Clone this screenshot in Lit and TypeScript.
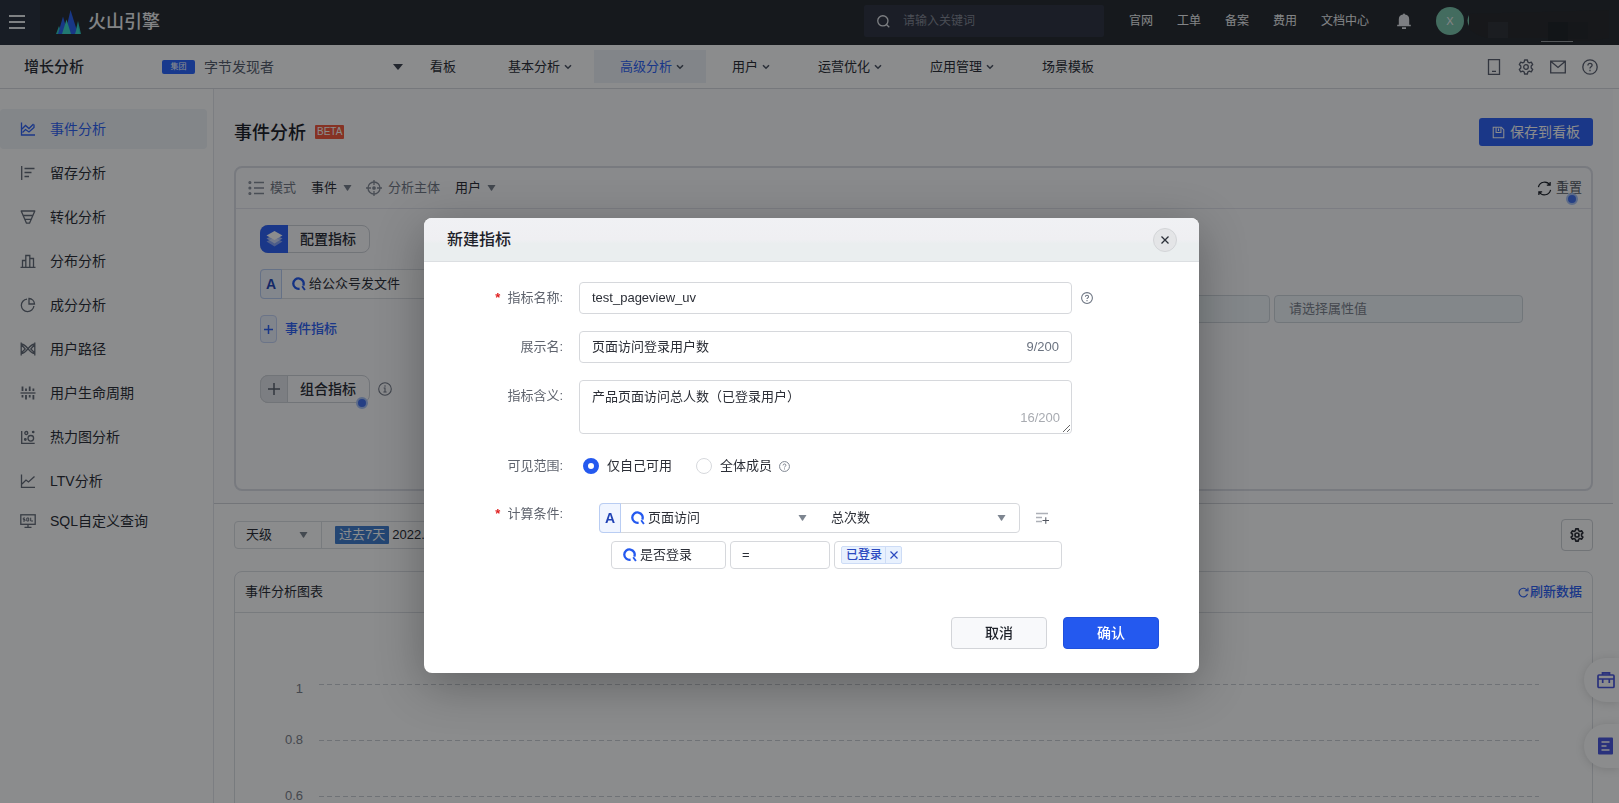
import { LitElement, html, css, svg, nothing, TemplateResult } from "lit";

const line = (body: TemplateResult, size = 16, width = 1.3) => html`<svg
  class="ico" width=${size} height=${size} viewBox="0 0 16 16" fill="none"
  stroke="currentColor" stroke-width=${width} aria-hidden="true">${body}</svg>`;

const gear = svg`<path d="M6.600 1h2.800l.4 2 1.500.9 2-.7 1.400 2.400-1.500 1.400v2l1.500 1.400-1.400 2.400-2-.7-1.500.9-.4 2H6.600l-.4-2-1.500-.9-2 .7-1.400-2.400L2.800 9V7L1.300 5.600l1.400-2.400 2 .7 1.500-.9z" stroke-linejoin="round"/><circle cx="8" cy="8" r="2.300"/>`;
const question = svg`<circle cx="8" cy="8" r="7.200"/><path d="M5.900 6.400c0-1.300.9-2.100 2.100-2.100s2.100.8 2.100 1.900c0 1.500-2.100 1.600-2.100 3.200"/><path d="M8 10.800v1.500"/>`;
const chevron = html`<svg width="8" height="6" viewBox="0 0 8 6" fill="none" stroke="#4e5564" stroke-width="1.600" aria-hidden="true"><path d="M1 1.200l3 3 3-3"/></svg>`;
const triangle = html`<svg class="tri" width="9" height="6" viewBox="0 0 9 6" aria-hidden="true"><path d="M0.500 0h8L5 5.600a.7.7 0 0 1-1 0z" fill="currentColor"/></svg>`;
const queryMark = html`<svg class="qmark" width="14" height="14" viewBox="0 0 14 14" fill="none" stroke="currentColor" stroke-width="2.300" aria-hidden="true"><path d="M7.600 11.700A5.200 5.200 0 1 1 11.300 8.600"/><path d="M10.200 9.300l2.700 3.700" stroke-width="1.900"/></svg>`;

const sideItems: { name: string; icon: TemplateResult; active?: boolean }[] = [
  { name: "事件分析", active: true, icon: svg`<path d="M1.500 1.500v12.500h13.500"/><path d="M2 8l3.500-3.500 3.500 3 4.500-4.500"/><path d="M2.500 11.500l3-3 3.500 2.500 5-4.500v-3"/>` },
  { name: "留存分析", icon: svg`<path d="M1.700 1v14M4.500 3.500h10M4.500 7.500h7M4.500 11.500h4.500"/>` },
  { name: "转化分析", icon: svg`<path d="M1.200 2h13.600L9.500 14.200h-3z" stroke-linejoin="round"/><path d="M3.200 6.500h9.600M5 10.300h6"/>` },
  { name: "分布分析", icon: svg`<path d="M.5 14.300h15M2.500 14V7.500h3.300M5.800 14V2.500h4V14M9.800 5.500h3.700V14"/>` },
  { name: "成分分析", icon: svg`<path d="M7 2.100A6.300 6.300 0 1 0 13.900 9"/><path d="M9 1.500a5.800 5.800 0 0 1 5.500 5.500H9z"/>` },
  { name: "用户路径", icon: svg`<path d="M1.200 1.500v13M14.800 1.500v13M1.200 3c6 0 7.600 9.500 13.600 9.500M1.200 12.500C7.200 12.500 8.800 3 14.800 3M1.200 3.500l4 4.500-4 4M14.800 3.500l-4 4.500 4 4"/>` },
  { name: "用户生命周期", icon: svg`<path d="M.5 8h15"/><path d="M2.500 1.500v4.500M6 3.500V6M9.700 1.500V6M13.400 3.500V6M2.500 10v2.500M6 10v4.500M9.700 10v2.500M13.400 10v4.500" stroke-width="1.800"/>` },
  { name: "热力图分析", icon: svg`<path d="M1.700 2v12.300h13"/><circle cx="10.800" cy="9.300" r="2.800"/><circle cx="6.300" cy="4" r="1.500"/><circle cx="13.200" cy="3" r=".7"/><circle cx="5.300" cy="10.500" r=".8"/>` },
  { name: "LTV分析", icon: svg`<path d="M1.500 1.500v12.800h13.500M2 11l4-4 2.500 2 6-5.500"/>` },
  { name: "SQL自定义查询", icon: svg`<rect x=".8" y="1.800" width="14.400" height="9.500"/><path d="M8 11.500v2.500M4.500 14.300h7"/><path d="M5 5H3.300v1.500H5V8H3M8.700 8H6.800V5h1.900zM10.700 4.700V8h2.300" stroke-width="1"/>` },
];

const navItems = [
  { name: "看板" },
  { name: "基本分析", more: true },
  { name: "高级分析", more: true, active: true },
  { name: "用户", more: true },
  { name: "运营优化", more: true },
  { name: "应用管理", more: true },
  { name: "场景模板" },
];

class AppRoot extends LitElement {
  static properties = {
    scope: { state: true },
    tagged: { state: true },
  };
  declare scope: string;
  declare tagged: boolean;

  constructor() {
    super();
    this.scope = "self";
    this.tagged = true;
  }

  static styles = css`
    :host {
      display: flex;
      flex-direction: column;
      height: 100vh;
      overflow: hidden;
      font: 13px/20px "Liberation Sans", "Noto Sans CJK SC", sans-serif;
      color: #2b2e36;
      background: #fff;
      --ink: #2b2e36;
      --blue: #2459ef;
      --line: #dcdfe4;
    }
    * { box-sizing: border-box; }
    button, input, select, textarea {
      font: inherit;
      color: inherit;
      margin: 0;
      padding: 0;
      border: 0;
      background: none;
      outline: none;
      border-radius: 0;
    }
    button { cursor: pointer; }
    select { appearance: none; }
    a { color: inherit; text-decoration: none; }
    h1, h2 { margin: 0; font-weight: 500; color: #1d2129; }
    svg { display: block; flex: none; }

    /* top bar */
    .topbar {
      flex: none;
      display: flex;
      height: 45px;
      background: #272b30;
      color: #fff;
      font-size: 12px;
    }
    .burger {
      width: 40px;
      display: grid;
      place-items: center;
      padding: 0 6px 1px 0;
      background: #2b3240;
    }
    .brand {
      display: flex;
      align-items: center;
      gap: 7px;
      margin-left: 16px;
      padding-bottom: 2px;
      font-size: 18px;
      font-weight: 500;
      color: #f0f1f3;
    }
    .search {
      display: flex;
      align-items: center;
      gap: 13px;
      width: 240px;
      height: 32px;
      margin: 5px 25px 0 auto;
      padding: 0 13px;
      border-radius: 2px;
      background: #303443;
    }
    .search input { flex: 1; min-width: 0; }
    .search input::placeholder { color: #868a96; opacity: 1; }
    .toplinks {
      display: flex;
      align-items: center;
      gap: 24px;
      height: 42px;
      color: #f0f1f3;
    }
    .bell { margin-left: 3px; }
    .avatar {
      width: 28px;
      height: 28px;
      border-radius: 50%;
      background: #7bc4aa;
      display: grid;
      place-items: center;
      font-size: 11px;
      margin-right: -21px;
    }

    /* product bar */
    .subbar {
      flex: none;
      display: flex;
      align-items: center;
      height: 44px;
      border-bottom: 1px solid #d9dbe0;
      padding: 0 21px 0 24px;
    }
    .product { width: 138px; font-size: 15px; font-weight: 500; }
    .level {
      width: 33px;
      height: 14px;
      border-radius: 2px;
      background: #2b67ff;
      color: #fff;
      font-size: 8px;
      line-height: 14px;
      text-align: center;
    }
    .project {
      display: flex;
      align-items: center;
      justify-content: space-between;
      width: 209px;
      padding: 0 1px 0 9px;
      color: #3e4350;
    }
    .project span { font-size: 14px; color: #575e6e; }
    .nav { display: flex; flex: 1; }
    .nav a {
      display: flex;
      align-items: center;
      gap: 4px;
      height: 33px;
      padding: 0 26px;
    }
    .nav a.more { padding-right: 22px; }
    .nav a.active { background: #eef3f8; color: #2f62f5; }
    .tools { display: flex; gap: 16px; color: #5b6070; }

    /* body */
    .body { flex: 1; display: flex; min-height: 0; padding-right: 6px; }
    .side {
      flex: none;
      width: 214px;
      border-right: 1px solid #e4e6ea;
      padding: 20px 6px 0 0;
      font-size: 14px;
    }
    .side a {
      display: flex;
      align-items: center;
      gap: 14px;
      height: 40px;
      padding-left: 20px;
      margin-bottom: 4px;
    }
    .side a:nth-last-child(2) { margin-bottom: 0; }
    .side svg { color: #656c78; }
    .side .active, .side .active svg { color: #2f62f5; }
    .side .active { background: #f0f4f7; border-radius: 4px; }
    .main { flex: 1; min-width: 0; }
    .upper {
      padding: 29px 20px 12px;
      background: #fbfbfd;
      border-bottom: 1px solid #d3d5da;
    }
    .titlebar { display: flex; align-items: center; gap: 9px; height: 28px; }
    .titlebar h1 { font-size: 18px; line-height: 28px; padding-top: 2px; }
    .beta {
      padding: 0 2px;
      height: 14px;
      border-radius: 1px;
      background: #f5593d;
      color: #fff;
      font-size: 10px;
      line-height: 14px;
    }
    .save {
      display: flex;
      align-items: center;
      gap: 5px;
      height: 28px;
      margin-left: auto;
      padding: 0 13px;
      border-radius: 3px;
      background: #2f62f5;
      color: #fff;
      font-size: 14px;
    }
    .panel {
      height: 325px;
      margin-top: 20px;
      border: 2px solid #dcdee6;
      border-radius: 8px;
    }
    .modes {
      display: flex;
      align-items: center;
      height: 41px;
      padding: 0 9px 0 12px;
      border-bottom: 1px solid #e3e4ec;
      color: #737986;
    }
    .modes .ico { margin-right: 6px; color: #868c98; }
    .pick { display: flex; align-items: center; color: var(--ink); margin: 0 14px 0 15px; }
    .pick select { padding-right: 14px; }
    .tri { color: #79808c; pointer-events: none; }
    .pick .tri { margin-left: -9px; }
    .reset { position: relative; display: flex; align-items: center; gap: 4px; margin-left: auto; color: #5a5f69; }
    .modes .reset .ico { color: #1d2129; margin: 0; }
    .dot {
      position: absolute;
      right: 4px;
      bottom: -7px;
      width: 12px;
      height: 12px;
      border: 2px solid #a9c3f7;
      border-radius: 50%;
      background: #4371ef;
    }
    .chip .dot { right: 1px; }
    .config { display: flex; padding: 16px 68px 0 24px; }
    .defs { display: flex; flex-direction: column; align-items: flex-start; width: 700px; }
    .chip {
      position: relative;
      display: flex;
      align-items: center;
      height: 28px;
      padding-right: 13px;
      border: 1px solid #cfd2d8;
      border-radius: 8px;
      font-size: 14px;
      font-weight: 500;
    }
    .chip i {
      width: 28px;
      height: 28px;
      margin: -1px 12px -1px -1px;
      display: grid;
      place-items: center;
      border-radius: 8px 0 0 8px;
      background: #2f62f5;
    }
    .chip.plus i { background: #e4e6ea; border: 1px solid #cfd2d8; color: #5a616d; }
    .metric {
      display: flex;
      align-items: center;
      width: 100%;
      height: 30px;
      margin: 16px 0;
      border: 1px solid var(--line);
      border-radius: 4px;
      background: #fff;
    }
    .letter {
      width: 22px;
      height: 30px;
      margin: -1px 10px -1px -1px;
      border: 1px solid #b9cdf3;
      border-radius: 4px 0 0 4px;
      background: #f0f5ff;
      color: #2547b8;
      font-size: 14px;
      font-weight: 700;
      line-height: 29px;
      text-align: center;
      flex: none;
    }
    .qmark { color: var(--blue); margin-right: 3px; }
    .add { display: flex; align-items: center; gap: 8px; color: #2f62f5; font-weight: 500; }
    .add i {
      width: 17px;
      height: 28px;
      display: grid;
      place-items: center;
      border: 1px solid #c4d3f5;
      border-radius: 4px;
      background: #edf2fd;
    }
    .combo { display: flex; align-items: center; gap: 8px; margin-top: 32px; color: #737986; }
    .combo .chip { color: var(--ink); }
    .filters { flex: 1; display: flex; justify-content: flex-end; gap: 4px; padding-top: 70px; }
    .filters select {
      width: 249px;
      height: 28px;
      padding-left: 14px;
      border: 1px solid #d0d6dc;
      border-radius: 4px;
      background: #f1f6f9;
      color: #7d838e;
      opacity: 1;
    }
    .lower { padding: 15px 20px 0; }
    .range { display: flex; align-items: center; justify-content: space-between; height: 32px; }
    .rangebox { display: flex; align-items: center; width: 460px; height: 28px; border: 1px solid var(--line); border-radius: 4px; }
    .rangebox label { display: flex; align-items: center; width: 87px; height: 28px; padding-left: 11px; border-right: 1px solid var(--line); }
    .rangebox select { width: 63px; margin-right: -10px; }
    .past { margin: 0 3px 0 13px; padding: 0 4px; height: 18px; line-height: 18px; border-radius: 1px; background: #417fd0; color: #fff; }
    .settings { width: 32px; height: 32px; display: grid; place-items: center; border: 1px solid #cfd2d6; border-radius: 4px; }
    .card { height: 400px; margin-top: 20px; border: 1px solid var(--line); border-radius: 8px 8px 0 0; }
    .cardhead { display: flex; align-items: center; justify-content: space-between; height: 41px; padding: 0 10px; border-bottom: 1px solid var(--line); }
    .refresh { display: flex; align-items: center; gap: 1px; color: #2f62f5; font-weight: 500; }
    .chart { display: grid; gap: 42px; padding: 64px 53px 0 0; color: #7d828c; line-height: 14px; }
    .tick { display: grid; grid-template-columns: 68px 1fr; gap: 16px; align-items: start; height: 14px; text-align: right; }
    .tick:first-child span { padding-top: 5px; }
    .tick hr {
      margin: 7px 0 0;
      width: 100%;
      border: 0;
      height: 1px;
      background: repeating-linear-gradient(90deg, #cccfd4 0 5px, transparent 5px 8px);
    }
    .float {
      position: fixed;
      right: 0;
      width: 35px;
      height: 44px;
      padding-left: 13px;
      border-radius: 22px 0 0 22px;
      background: #fff;
      box-shadow: 0 1px 10px rgba(0, 0, 0, 0.14);
      color: #4a57e0;
    }
    .kit { bottom: 101px; }
    .note { bottom: 35px; }

    /* dialog */
    .mask {
      position: fixed;
      inset: 0;
      display: flex;
      justify-content: center;
      align-items: flex-start;
      padding: 218px 0 0 4px;
      background: rgba(2, 4, 6, 0.46);
    }
    .dialog {
      width: 775px;
      border-radius: 8px;
      background: #fff;
      overflow: hidden;
      box-shadow: 0 12px 48px rgba(0, 0, 0, 0.3);
    }
    .dialog header {
      display: flex;
      align-items: center;
      justify-content: space-between;
      height: 44px;
      padding: 0 22px 0 23px;
      border-bottom: 1px solid #dcdfe2;
      background: linear-gradient(#f0f1f4, #efeff2 50%, #eaeeef 60%, #eaeeef);
    }
    .dialog h2 { font-size: 16px; line-height: 22px; padding-top: 1px; }
    .close { width: 24px; height: 24px; display: grid; place-items: center; border: 1px solid #d3d5d8; border-radius: 50%; background: #e4e5e7; }
    .form { display: flex; flex-direction: column; gap: 17px; padding: 20px 24px 0 0; }
    .field { display: grid; grid-template-columns: 139px 1fr; gap: 16px; }
    .field > label, .field > .lab { text-align: right; line-height: 32px; color: #5f646e; }
    .field > .lab { line-height: 30px; }
    .req::before { content: "*"; margin-right: 7px; color: #e02020; font-weight: 700; }
    .ctl { display: flex; align-items: center; gap: 9px; color: #6b7380; }
    .box {
      display: flex;
      align-items: center;
      width: 493px;
      height: 32px;
      padding: 0 12px;
      border: 1px solid #d6d8dc;
      border-radius: 4px;
    }
    .box input { flex: 1; min-width: 0; color: var(--ink); }
    .area { position: relative; width: 493px; }
    .area textarea {
      display: block;
      width: 100%;
      height: 54px;
      padding: 6px 12px;
      border: 1px solid #d6d8dc;
      border-radius: 4px;
      color: var(--ink);
      resize: vertical;
    }
    .area span { position: absolute; right: 12px; bottom: 6px; color: #a8abb1; }
    .radios { display: flex; align-items: center; height: 30px; padding-left: 4px; color: #7a818d; }
    .radios label { display: flex; align-items: center; gap: 8px; margin-right: 24px; color: var(--ink); }
    .radios label:last-of-type { margin-right: 7px; }
    .radios input {
      appearance: none;
      width: 16px;
      height: 16px;
      border: 1px solid #d6d8dc;
      border-radius: 50%;
      background: #fff;
    }
    .radios input:checked { border: 5px solid var(--blue); }
    .conds { display: flex; flex-direction: column; gap: 8px; padding: 5px 0 0 20px; }
    .row { display: flex; align-items: center; }
    .event { display: flex; align-items: center; width: 421px; height: 30px; border: 1px solid #d6d8dc; border-radius: 4px; }
    .event select { height: 28px; }
    .event .letter { color: #2143b5; }
    .event .first { width: 159px; margin-right: -9px; }
    .event .second { width: 175px; margin: 0 -9px 0 24px; }
    .event .tri, .rangebox .tri { color: #7d8590; }
    .appendix { margin-left: 16px; color: #8a8f98; }
    .filter { gap: 4px; padding-left: 12px; }
    .cell { display: flex; align-items: center; height: 28px; border: 1px solid #d6d8dc; border-radius: 4px; }
    .cell select { flex: 1; min-width: 0; height: 26px; }
    .prop { width: 115px; padding-left: 11px; }
    .op { width: 100px; padding-left: 11px; }
    .vals { width: 228px; padding-left: 6px; }
    .tag { display: flex; height: 18px; border: 1px solid #cddcf6; border-radius: 2px; background: #e8f1fe; color: #2c49c0; font-size: 12px; font-weight: 500; line-height: 16px; }
    .tag span { padding: 0 3px 0 4px; }
    .tag button { width: 16px; display: grid; place-items: center; border-left: 1px solid #cddcf6; }
    .dialog footer { display: flex; justify-content: flex-end; gap: 16px; padding: 48px 40px 24px; }
    .btn { width: 96px; height: 32px; border: 1px solid #d3d5d9; border-radius: 4px; background: #f8f9fb; color: #1d2129; font-size: 14px; font-weight: 500; }
    .btn.primary { border-color: #1f50dd; background: var(--blue); color: #fff; }
  `;

  render() {
    return html`
      ${this.topbar()} ${this.subbar()}
      <div class="body">
        <nav class="side" aria-label="分析">
          ${sideItems.map((i) => html`<a href="#" class=${i.active ? "active" : ""}>${line(i.icon)}${i.name}</a>`)}
        </nav>
        <main class="main">${this.upper()} ${this.lower()}</main>
      </div>
      <button class="float kit" aria-label="工具箱">
        <svg width="18" height="18" viewBox="0 0 18 18" fill="none" stroke="currentColor" stroke-width="1.700"><path d="M5.500 4V1.800h7V4" fill="currentColor" fill-opacity=".5"/><rect x="1" y="4" width="16" height="12.500" rx="1"/><path d="M1 8h16M5.700 8v4M12.300 8v4"/></svg>
      </button>
      <button class="float note" aria-label="文档">
        <svg width="17" height="18" viewBox="0 0 17 18"><rect x="1" y=".5" width="15" height="17" rx="1" fill="currentColor"/><path d="M4.500 5h8M4.500 9h5M4.500 13h8" stroke="#fff" stroke-width="1.500"/></svg>
      </button>
      ${this.dialog()}
    `;
  }

  topbar() {
    return html`<header class="topbar">
      <button class="burger" aria-label="菜单">
        <svg width="16" height="14" viewBox="0 0 16 14" stroke="#e8eaed" stroke-width="1.800"><path d="M0 1h16M0 7h16M0 13h16"/></svg>
      </button>
      <a class="brand" href="#">
        <svg width="25" height="24" viewBox="0 0 25 24">
          <path d="M0 24l3-8 3 8zM19 24l3-13 3 13z" fill="#2fc7bd"/>
          <path d="M2 24L7 6.500 12 24zM9 24l5.500-24L22 24z" fill="#2c62f0"/>
          <path d="M6 24l4.500-14.500L15 24zM19 24l2.500-8L24 24z" fill="#3cdccb"/>
        </svg>火山引擎</a>
      <label class="search">
        <svg width="13" height="13" viewBox="0 0 14 14" fill="none" stroke="#e6e8ec" stroke-width="1.400"><circle cx="6.300" cy="6.300" r="5.500"/><path d="M10.200 10.200l3 3"/></svg>
        <input type="search" placeholder="请输入关键词" aria-label="搜索" />
      </label>
      <nav class="toplinks">
        ${["官网", "工单", "备案", "费用", "文档中心"].map((t) => html`<a href="#">${t}</a>`)}
        <svg class="bell" width="16" height="16" viewBox="0 0 16 16" fill="#e4e6ea"><path d="M7 1.500a1 1 0 0 1 2 0 5 5 0 0 1 4.200 5v5.300h1.600v1.500H1.200v-1.500h1.600V6.500A5 5 0 0 1 7 1.500zM6 14.200h4V16H6z"/></svg>
        <span class="avatar">X</span>
        <svg width="152" height="42" viewBox="0 0 152 42">
          <path d="M2 15q-3 6 0 11z" fill="#7bc4aa"/>
          <path d="M2 14L142 10v28q-30 6-60 0H20Q6 34 2 28z" fill="#292a2d"/>
          <path d="M21 22h20v16H21z" fill="#313338"/><path d="M81 22h20v19H81z" fill="#212327"/><path d="M101 22h20v17H101z" fill="#26282c"/>
          <path d="M74 41.500h32" stroke="#9a9da2"/>
        </svg>
      </nav>
    </header>`;
  }

  subbar() {
    return html`<div class="subbar">
      <div class="product">增长分析</div>
      <span class="level">集团</span>
      <div class="project"><span>字节发现者</span><svg width="10" height="6" viewBox="0 0 10 6" fill="currentColor"><path d="M0 0h10L5.500 5.600a.7.7 0 0 1-1 0z"/></svg></div>
      <nav class="nav">
        ${navItems.map((n) => html`<a href="#" class="${n.more ? "more" : ""} ${n.active ? "active" : ""}">${n.name}${n.more ? chevron : nothing}</a>`)}
      </nav>
      <div class="tools">
        <button aria-label="移动端">${line(svg`<path d="M2.500.7h11v14.600h-11zM6 12.300h4"/>`)}</button>
        <button aria-label="设置">${line(gear)}</button>
        <button aria-label="消息">${line(svg`<path d="M.7 2.200h14.600v11.600H.7zM1 2.500l7 6 7-6"/>`)}</button>
        <button aria-label="帮助">${line(question)}</button>
      </div>
    </div>`;
  }

  upper() {
    return html`<section class="upper">
      <div class="titlebar">
        <h1>事件分析</h1>
        <span class="beta">BETA</span>
        <button class="save">${line(svg`<path d="M1.500 1.500h10l3 3v10h-13z"/><path d="M5 1.500V8h6V1.500M8 3v3"/>`, 13)}保存到看板</button>
      </div>
      <div class="panel">
        <div class="modes">
          ${line(svg`<path d="M6 2.500h10M6 8h10M6 13.500h10"/><circle cx="1.900" cy="2.500" r=".9"/><circle cx="1.900" cy="8" r=".9"/><circle cx="1.900" cy="13.500" r=".9"/>`)}模式
          <label class="pick"><select aria-label="模式"><option>事件</option></select>${triangle}</label>
          ${line(svg`<circle cx="8" cy="8" r="6"/><circle cx="8" cy="8" r="1.200" fill="currentColor"/><path d="M8 0v5M8 11v5M0 8h5M11 8h5"/>`)}分析主体
          <label class="pick"><select aria-label="分析主体"><option>用户</option></select>${triangle}</label>
          <button class="reset">${line(svg`<path d="M14.500 9.500a6.700 6.700 0 0 1-12.300 2M1.500 6.500a6.700 6.700 0 0 1 12.300-2M10.500 4.500h3.500V1M5.500 11.500H2V15"/>`, 15)}重置<span class="dot"></span></button>
        </div>
        <div class="config">
          <div class="defs">
            <div class="chip"><i><svg width="17" height="18" viewBox="0 0 17 18" fill="#fff"><path d="M8.500 7.500l8 4-8 5-8-5z" opacity=".45"/><path d="M8.500 4.500l8 4-8 5-8-5z" opacity=".6"/><path d="M8.500 1l8 4.500-8 4.500-8-4.500z"/></svg></i>配置指标</div>
            <div class="metric"><span class="letter">A</span>${queryMark}给公众号发文件</div>
            <button class="add"><i><svg width="9" height="9" viewBox="0 0 9 9" stroke="currentColor" stroke-width="1.500"><path d="M4.500 0v9M0 4.500h9"/></svg></i>事件指标</button>
            <div class="combo">
              <button class="chip plus"><i><svg width="12" height="12" viewBox="0 0 12 12" stroke="currentColor" stroke-width="1.500"><path d="M6 0v12M0 6h12"/></svg></i>组合指标<span class="dot"></span></button>
              ${line(svg`<circle cx="8" cy="8" r="7.200"/><path d="M6.500 6.800H8v4.700M6.200 11.500h3.600M8 3.800v1.500"/>`, 14, 1.2)}
            </div>
          </div>
          <div class="filters">
            <select aria-label="属性" disabled><option></option></select>
            <select aria-label="属性值" disabled><option>请选择属性值</option></select>
          </div>
        </div>
      </div>
    </section>`;
  }

  lower() {
    return html`<section class="lower">
      <div class="range">
        <div class="rangebox">
          <label><select aria-label="粒度"><option>天级</option></select>${triangle}</label>
          <span class="past">过去7天</span><span>2022.</span>
        </div>
        <button class="settings" aria-label="图表设置">${line(gear, 14, 1.9)}</button>
      </div>
      <div class="card">
        <div class="cardhead">
          <span>事件分析图表</span>
          <button class="refresh">${line(svg`<path d="M13.800 10a6.300 6.300 0 1 1-.8-5.500M14.500 1v4.500H10"/>`, 11, 1.7)}刷新数据</button>
        </div>
        <div class="chart">
          ${["1", "0.8", "0.6"].map((t) => html`<div class="tick"><span>${t}</span><hr /></div>`)}
        </div>
      </div>
    </section>`;
  }

  dialog() {
    return html`<div class="mask">
      <section class="dialog" role="dialog" aria-modal="true" aria-labelledby="dlg">
        <header>
          <h2 id="dlg">新建指标</h2>
          <button class="close" aria-label="关闭"><svg width="8" height="8" viewBox="0 0 8 8" stroke="#2b2f38" stroke-width="1.300"><path d="M.5.5l7 7M7.500.5l-7 7"/></svg></button>
        </header>
        <div class="form">
          <div class="field">
            <label class="req" for="name">指标名称:</label>
            <div class="ctl"><div class="box"><input id="name" value="test_pageview_uv" /></div>${line(question, 12, 1.4)}</div>
          </div>
          <div class="field">
            <label for="shown">展示名:</label>
            <div class="ctl"><div class="box"><input id="shown" value="页面访问登录用户数" /><span>9/200</span></div></div>
          </div>
          <div class="field">
            <label for="mean">指标含义:</label>
            <div class="area"><textarea id="mean" .value=${"产品页面访问总人数（已登录用户）"}></textarea><span>16/200</span></div>
          </div>
          <div class="field">
            <span class="lab" id="scope">可见范围:</span>
            <div class="radios" role="radiogroup" aria-labelledby="scope">
              <label><input type="radio" name="scope" .checked=${this.scope === "self"} @change=${() => (this.scope = "self")} />仅自己可用</label>
              <label><input type="radio" name="scope" .checked=${this.scope === "all"} @change=${() => (this.scope = "all")} />全体成员</label>
              ${line(question, 11, 1.4)}
            </div>
          </div>
          <div class="field">
            <label class="req" for="event">计算条件:</label>
            <div class="conds">
              <div class="row">
                <div class="event">
                  <span class="letter">A</span>${queryMark}
                  <select class="first" id="event"><option>页面访问</option></select>${triangle}
                  <select class="second" aria-label="统计方式"><option>总次数</option></select>${triangle}
                </div>
                <button class="appendix" aria-label="添加筛选"><svg width="13" height="12" viewBox="0 0 13 12" fill="none" stroke="currentColor"><path d="M0 1.500h12M0 5.500h6M0 9.500h6" stroke-width="1.500" opacity=".7"/><path d="M6.500 8.500h6.500M9.800 5.300v6.500" stroke="#50555f" stroke-width="1"/></svg></button>
              </div>
              <div class="row filter">
                <div class="cell prop">${queryMark}<select aria-label="属性"><option>是否登录</option></select></div>
                <div class="cell op"><select aria-label="关系"><option>=</option></select></div>
                <div class="cell vals">
                  ${this.tagged ? html`<div class="tag"><span>已登录</span><button aria-label="移除" @click=${() => (this.tagged = false)}><svg width="8" height="8" viewBox="0 0 8 8" stroke="currentColor" stroke-width="1.200"><path d="M.5.5l7 7M7.500.5l-7 7"/></svg></button></div>` : nothing}
                </div>
              </div>
            </div>
          </div>
        </div>
        <footer>
          <button class="btn">取消</button>
          <button class="btn primary">确认</button>
        </footer>
      </section>
    </div>`;
  }
}

customElements.define("app-root", AppRoot);
